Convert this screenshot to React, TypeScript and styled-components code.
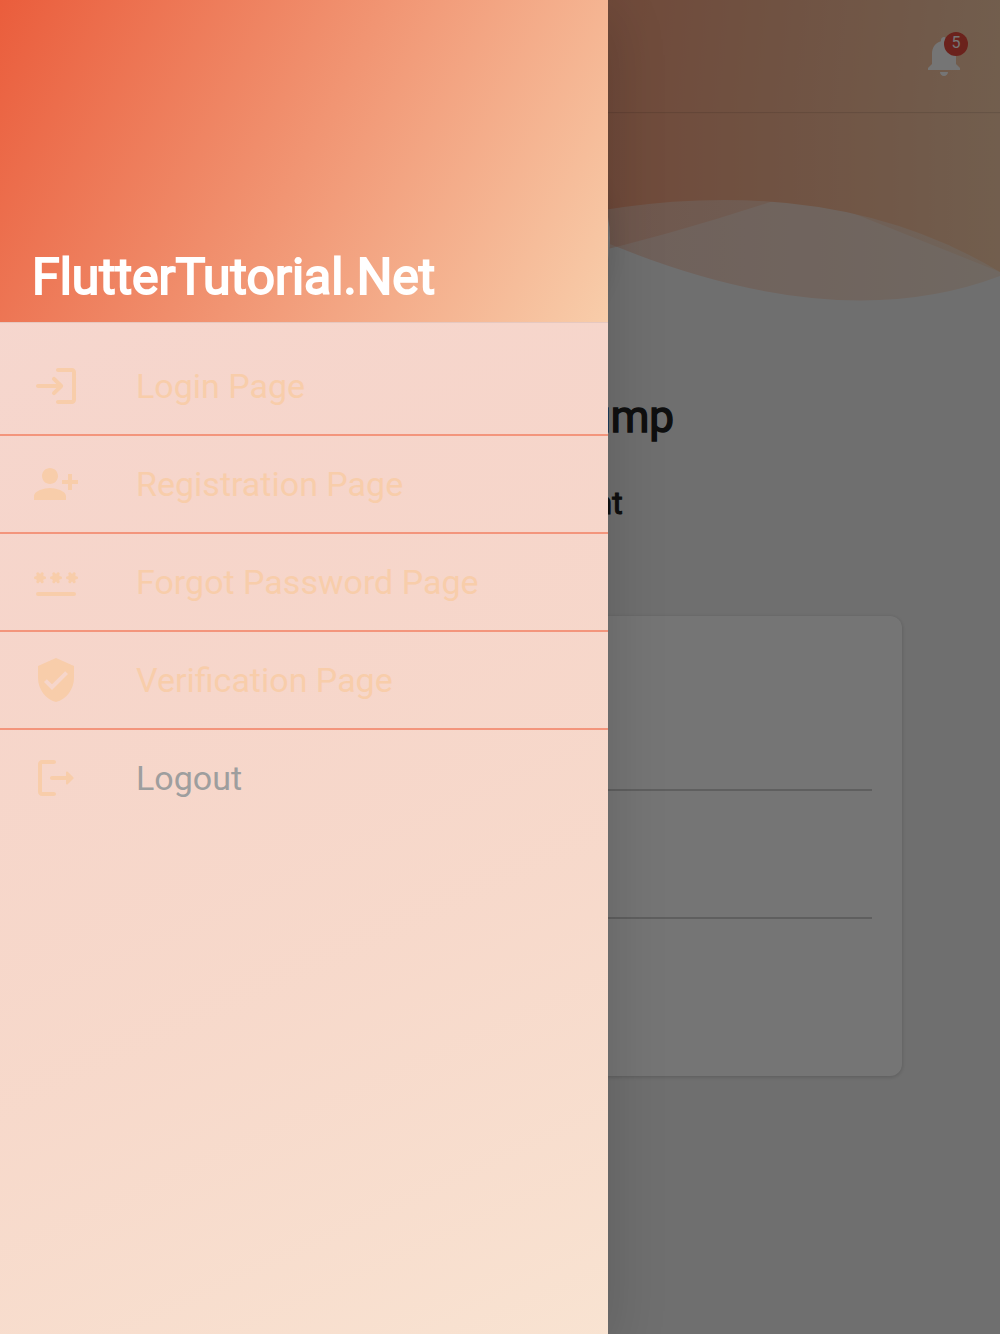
import React from "react";
import styled, { createGlobalStyle } from "styled-components";

type RGB = [number, number, number];
const primary: RGB = [234, 93, 60];
const accent: RGB = [248, 205, 170];
const rgb = (c: RGB, a = 1) => `rgba(${c.join(", ")}, ${a})`;

/* straight-alpha interpolation between two translucent colours */
const tint = Array.from({ length: 11 }, (_, i) => {
  const t = i / 10;
  const c = primary.map((p, k) => p + (accent[k] - p) * t) as RGB;
  return `${rgb(c, 0.2 + 0.3 * t)} ${t * 100}%`;
}).join(", ");

const Global = createGlobalStyle`
  body { margin: 0; font-family: Roboto, "Liberation Sans", sans-serif; }
  *, *::before { box-sizing: border-box; }
`;

const Screen = styled.div`
  position: relative;
  width: 1000px;
  height: 1334px;
  overflow: hidden;
  background: #f2f2f2;
`;

const Page = styled.div`
  display: flex;
  flex-direction: column;
  height: 100%;
`;

const AppBar = styled.header`
  display: flex;
  align-items: flex-start;
  justify-content: flex-end;
  flex: none;
  height: 112px;
  padding: 32px 32px 0 0;
  background: linear-gradient(96.39deg, ${rgb(primary)}, ${rgb(accent)});
  box-shadow: 0 1px 1px rgba(0, 0, 0, 0.1);
  z-index: 1;
`;

const Bell = styled.div`
  position: relative;
  display: flex;
  width: 48px;
  height: 48px;
  color: #fff;
`;

const Badge = styled.span`
  position: absolute;
  top: 0;
  right: 0;
  width: 24px;
  height: 24px;
  border-radius: 12px;
  background: #ea4a3e;
  font-size: 16px;
  line-height: 22px;
  text-align: center;
`;

const Profile = styled.main`
  display: flex;
  flex-direction: column;
  align-items: center;
  position: relative;
  padding-top: 16px;
`;

const Waves = styled.svg`
  position: absolute;
  top: 0;
  left: 0;
`;

const Avatar = styled.div`
  display: flex;
  align-items: center;
  justify-content: center;
  position: relative;
  width: 220px;
  height: 220px;
  border-radius: 50%;
  background: #fff;
  color: #e0e0e0;
  box-shadow: 5px 5px 20px rgba(0, 0, 0, 0.06);
`;

const Heading = styled.h1<{ $size: number; $top: number }>`
  margin: ${(p) => p.$top}px 0 0;
  font-size: ${(p) => p.$size}px;
  line-height: ${(p) => p.$size + 8}px;
  font-weight: 400;
  -webkit-text-stroke: ${(p) => p.$size / 30}px #222;
  color: #222;
`;

const Card = styled.section`
  width: 804px;
  height: 460px;
  margin-top: 93px;
  padding: 47px 30px 0;
  border-radius: 12px;
  background: #fff;
  box-shadow: 0 1px 4px rgba(0, 0, 0, 0.18);
`;

const Field = styled.div`
  height: 128px;
  border-bottom: 2px solid #d0d0d0;
`;

const Scrim = styled.div`
  position: absolute;
  inset: 0;
  z-index: 2;
  background: rgba(0, 0, 0, 0.54);
`;

const Drawer = styled.aside`
  position: absolute;
  inset: 0 auto 0 0;
  z-index: 3;
  width: 608px;
  background: linear-gradient(155.5deg, ${tint}), #f9f9f9;
  box-shadow: 0 16px 56px rgba(0, 0, 0, 0.16);
`;

const DrawerHeader = styled.div`
  display: flex;
  align-items: flex-end;
  height: 323px;
  padding: 0 32px 16px;
  border-bottom: 1px solid #e6c8c0;
  background: linear-gradient(117.76deg, ${rgb(primary)}, ${rgb(accent)});
  background-clip: padding-box;
`;

const Brand = styled.div`
  font-size: 50px;
  line-height: 58px;
  -webkit-text-stroke: 1.9px #fff;
  color: #fff;
`;

const Menu = styled.nav`
  padding-top: 15px;
`;

const Item = styled.a<{ $muted?: boolean }>`
  display: flex;
  align-items: center;
  gap: 56px;
  height: 96px;
  padding-left: 32px;
  font-size: 34px;
  color: ${(p) => (p.$muted ? "#9e9e9e" : rgb(accent))};

  & + & {
    height: 98px;
    border-top: 2px solid #f3957c;
  }
`;

const Glyph = styled.svg`
  flex: none;
  width: 48px;
  height: 48px;
  color: ${rgb(accent)};
`;

const items: { label: string; icon: React.ReactNode; muted?: boolean }[] = [
  {
    label: "Login Page",
    icon: (
      <path d="M10.3 7.7c-.39.39-.39 1.01 0 1.4l1.9 1.9H3c-.55 0-1 .45-1 1s.45 1 1 1h9.2l-1.9 1.9c-.39.39-.39 1.01 0 1.4.39.39 1.01.39 1.4 0l3.59-3.59c.39-.39.39-1.02 0-1.41L11.7 7.7c-.39-.39-1.01-.39-1.4 0zM20 19h-7c-.55 0-1 .45-1 1s.45 1 1 1h7c1.1 0 2-.9 2-2V5c0-1.1-.9-2-2-2h-7c-.55 0-1 .45-1 1s.45 1 1 1h7v14z" />
    ),
  },
  {
    label: "Registration Page",
    icon: (
      <path d="M13 8c0-2.21-1.79-4-4-4S5 5.79 5 8s1.79 4 4 4 4-1.79 4-4zm2 2v2h3v3h2v-3h3v-2h-3V7h-2v3h-3zM1 18v2h16v-2c0-2.66-5.33-4-8-4s-8 1.34-8 4z" />
    ),
  },
  {
    label: "Forgot Password Page",
    icon: (
      <>
        <rect x="2" y="17" width="20" height="2" rx="1" />
        {[4, 12, 20].map((x) => (
          <React.Fragment key={x}>
            <circle cx={x} cy="9.85" r="1.95" />
            <path
              d={`M${x - 2.25} 9.85h4.5M${x - 1.1} 7.85l2.2 4M${x + 1.1} 7.85l-2.2 4`}
              stroke="currentColor"
              strokeWidth="1.5"
              strokeLinecap="round"
            />
          </React.Fragment>
        ))}
      </>
    ),
  },
  {
    label: "Verification Page",
    icon: (
      <path d="M12 1L3 5v6c0 5.55 3.84 10.74 9 12 5.16-1.26 9-6.45 9-12V5l-9-4zm-2 16l-4-4 1.41-1.41L10 14.17l6.59-6.59L18 9l-8 8z" />
    ),
  },
  {
    label: "Logout",
    muted: true,
    icon: (
      <path d="M5 5h6c.55 0 1-.45 1-1s-.45-1-1-1H5c-1.1 0-2 .9-2 2v14c0 1.1.9 2 2 2h6c.55 0 1-.45 1-1s-.45-1-1-1H5V5zM20.65 11.65l-2.79-2.79c-.32-.32-.86-.1-.86.35V11h-7c-.55 0-1 .45-1 1s.45 1 1 1h7v1.79c0 .45.54.67.85.35l2.79-2.79c.2-.19.2-.51.01-.7z" />
    ),
  },
];

export default function App() {
  return (
    <Screen>
      <Global />
      <Page>
        <AppBar>
          <Bell>
            <svg width="48" height="48" viewBox="0 0 24 24" fill="currentColor">
              <path d="M12 22c1.1 0 2-.9 2-2h-4c0 1.1.89 2 2 2zm6-6v-5c0-3.07-1.64-5.64-4.5-6.32V4c0-.83-.67-1.5-1.5-1.5s-1.5.67-1.5 1.5v.68C7.63 5.36 6 7.92 6 11v5l-2 2v1h16v-1l-2-2z" />
            </svg>
            <Badge>5</Badge>
          </Bell>
        </AppBar>
        <Profile>
          <Waves width="1000" height="200" viewBox="0 0 1000 200">
            <defs>
              <linearGradient id="sunset" gradientUnits="userSpaceOnUse" x1="0" y1="0" x2="1000" y2="0">
                <stop offset="0" stopColor={rgb(primary)} />
                <stop offset="1" stopColor={rgb(accent)} />
              </linearGradient>
            </defs>
            <g fill="url(#sunset)">
              <path opacity="0.4" d="M0 0V160Q200 200 500 80Q800 240 1000 164V0Z" />
              <path opacity="0.4" d="M0 0V160Q333 240 800 80L1000 160V0Z" />
              <path d="M0 0V160Q200 200 500 120Q800 40 1000 160V0Z" />
            </g>
          </Waves>
          <Avatar>
            <svg width="160" height="160" viewBox="0 0 24 24" fill="currentColor">
              <path d="M12 12c2.21 0 4-1.79 4-4s-1.79-4-4-4-4 1.79-4 4 1.79 4 4 4zm0 2c-2.67 0-8 1.34-8 4v2h16v-2c0-2.66-5.33-4-8-4z" />
            </svg>
          </Avatar>
          <Heading $size={44} $top={43}>Mr. Donald Trump</Heading>
          <Heading as="h2" $size={32} $top={40}>Former President</Heading>
          <Card>
            <Field />
            <Field />
          </Card>
        </Profile>
      </Page>
      <Scrim />
      <Drawer>
        <DrawerHeader>
          <Brand>FlutterTutorial.Net</Brand>
        </DrawerHeader>
        <Menu>
          {items.map((it) => (
            <Item key={it.label} $muted={it.muted}>
              <Glyph viewBox="0 0 24 24" fill="currentColor">{it.icon}</Glyph>
              {it.label}
            </Item>
          ))}
        </Menu>
      </Drawer>
    </Screen>
  );
}
